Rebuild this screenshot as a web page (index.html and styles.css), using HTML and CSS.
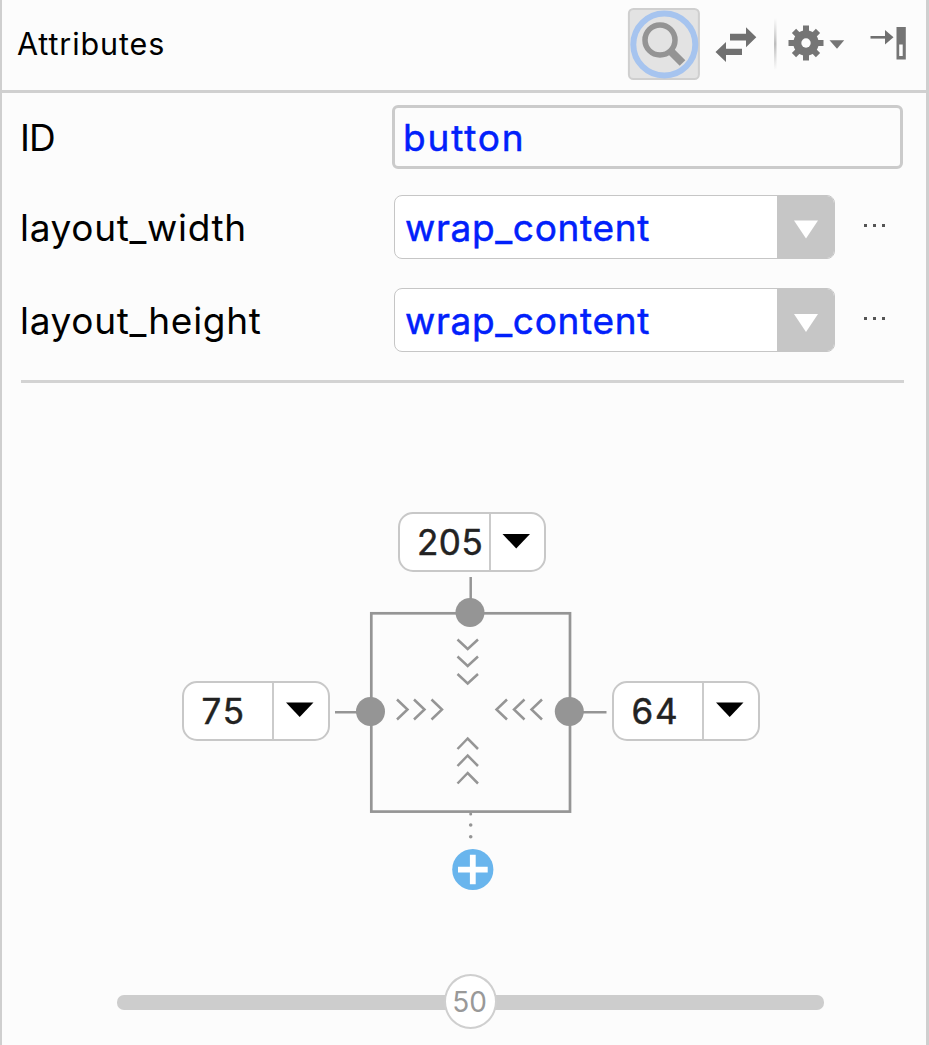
FILE: index.html
```html
<!DOCTYPE html>
<html lang="en">
<head>
<meta charset="utf-8">
<title>Attributes</title>
<link rel="stylesheet" href="styles.css">
</head>
<body>
<main class="panel">
  <header class="header">
    <h1 class="title">Attributes</h1>
    <svg class="toolbar" width="301" height="90" viewBox="625 0 301 90">
      <defs>
        <linearGradient id="fade" x1="0" y1="0" x2="0" y2="1">
          <stop offset="0" stop-color="#c4c4c4" stop-opacity="0"/>
          <stop offset=".5" stop-color="#bdbdbd"/>
          <stop offset="1" stop-color="#c4c4c4" stop-opacity="0"/>
        </linearGradient>
      </defs>
      <rect x="628.9" y="9" width="70" height="70" rx="4.500" fill="#e3e3e3" stroke="#cfcfcf" stroke-width="2"/>
      <circle cx="664.300" cy="44.500" r="31" fill="none" stroke="#a6c4ef" stroke-width="6"/>
      <circle cx="660" cy="40" r="15" fill="none" stroke="#949494" stroke-width="5.500"/>
      <path d="M671 51.500L682.500 63" stroke="#949494" stroke-width="8"/>
      <g fill="#707070">
        <path d="M730 33.800H746V27.300L756.300 37.300L746 47.300V40.500H730Z"/>
        <path d="M742 48.700H726V42L715.500 52L726 62V55H742Z"/>
      </g>
      <rect x="774" y="18" width="2.500" height="52" fill="url(#fade)"/>
      <g fill="#757575">
        <g transform="translate(806 43)">
          <circle r="12.700"/>
          <rect x="-3" y="-17.500" width="6" height="35"/>
          <rect x="-17.500" y="-3" width="35" height="6"/>
          <rect x="-3" y="-17" width="6" height="34" transform="rotate(45)"/>
          <rect x="-3" y="-17" width="6" height="34" transform="rotate(-45)"/>
          <circle r="4.700" fill="#fcfcfc"/>
        </g>
        <path d="M829.500 40.300H844.200L837 48.800Z"/>
      </g>
      <path d="M870.500 37.300H887" stroke="#707070" stroke-width="2.600"/>
      <path d="M885 30L893.500 37.300L885 44.600Z" fill="#707070"/>
      <rect x="896.500" y="27" width="9.300" height="32.500" fill="#757575"/>
      <rect x="899.200" y="44.500" width="3.500" height="11.500" fill="#fcfcfc"/>
    </svg>
  </header>

  <section class="form">
    <div class="row">
      <label class="label label-id">ID</label>
      <div class="input"><span class="value value-id">button</span></div>
    </div>
    <div class="row">
      <label class="label">layout_width</label>
      <div class="combo">
        <span class="value value-combo">wrap_content</span>
        <svg class="drop" width="57" height="64"><path d="M17 25.500H41L29 43.500Z" fill="#fff"/></svg>
      </div>
      <svg class="more" width="24" height="6"><path d="M1 1h3v3h-3zM10 1h3v3h-3zM19 1h3v3h-3z" fill="#555"/></svg>
    </div>
    <div class="row">
      <label class="label">layout_height</label>
      <div class="combo">
        <span class="value value-combo">wrap_content</span>
        <svg class="drop" width="57" height="64"><path d="M17 26H41L29 44Z" fill="#fff"/></svg>
      </div>
      <svg class="more" width="24" height="6"><path d="M1 1h3v3h-3zM10 1h3v3h-3zM19 1h3v3h-3z" fill="#555"/></svg>
    </div>
  </section>

  <section class="constraints">
    <svg class="wires" width="924" height="562" viewBox="2 383 924 562">
      <g fill="none" stroke="#959595">
        <rect x="371.300" y="613.300" width="198.700" height="198.300" stroke-width="2.700"/>
        <path d="M470.700 577V600M335 712.300H358M582 712.300H606.500" stroke-width="2.500"/>
        <path stroke-width="2.500" d="M457.500 639.500L467.700 649L478 639.500M457.500 656.500L467.700 666L478 656.500M457.500 674L467.700 683.500L478 674
          M457.500 749L467.700 738.500L478 749M457.500 766L467.700 755.500L478 766M457.500 783.500L467.700 773L478 783.500
          M397 699.500L407.500 709.500L397 719.500M414 699.500L424.500 709.500L414 719.500M431.500 699.500L442 709.500L431.500 719.500
          M507 699.500L496.500 709.500L507 719.500M524.500 699.500L514 709.500L524.500 719.500M542 699.500L531.500 709.500L542 719.500"/>
      </g>
      <g fill="#959595">
        <circle cx="470" cy="612.400" r="14.500"/>
        <circle cx="370.500" cy="711.500" r="14.500"/>
        <circle cx="569.300" cy="711.500" r="14.500"/>
        <circle cx="470.700" cy="814" r="1.500"/>
        <circle cx="470.700" cy="825" r="1.800"/>
        <circle cx="470.700" cy="836.700" r="1.800"/>
      </g>
      <circle cx="472.800" cy="869.500" r="20.600" fill="#69b5ed"/>
      <path d="M458 869.600H487.700M472.800 854.800V884.200" stroke="#fff" stroke-width="5.800"/>
    </svg>
    <div class="margin margin-top"><span class="num num-long">205</span><svg class="pick" width="55" height="58"><path d="M11.500 21H39L25.200 35.500Z"/></svg></div>
    <div class="margin margin-left"><span class="num num-short">75</span><svg class="pick" width="56" height="58"><path d="M12 20.500H39.500L25.700 35Z"/></svg></div>
    <div class="margin margin-right"><span class="num num-short">64</span><svg class="pick" width="56" height="58"><path d="M12 20.500H39.500L25.700 35Z"/></svg></div>
  </section>

  <div class="slider">
    <div class="track"></div>
    <div class="thumb">50</div>
  </div>
</main>
</body>
</html>
```

FILE: styles.css
```css
* { box-sizing: border-box; }
body {
  margin: 0;
  font-family: Inter, "Liberation Sans", sans-serif;
  background: #fcfcfc;
  color: #000;
}
.panel {
  width: 929px;
  height: 1045px;
  overflow: hidden;
  border-left: 2px solid #cfcfcf;
  border-right: 3px solid #cfcfcf;
}
.header {
  display: flex;
  align-items: center;
  justify-content: space-between;
  height: 93px;
  padding-left: 15px;
  border-bottom: 3px solid #d0d0d0;
}
.title {
  margin: 0 0 3px;
  font-size: 30.5px;
  font-weight: 400;
  line-height: 40px;
  letter-spacing: .9px;
}
.toolbar { flex: none; }
.form {
  display: flex;
  flex-direction: column;
  height: 290px;
  margin: 0 22px 0 19px;
  padding-top: 12px;
  border-bottom: 3px solid #d3d3d3;
}
.row {
  display: flex;
  align-items: center;
  height: 64px;
  margin-bottom: 26px;
}
.row + .row { margin-bottom: 29px; }
.label {
  width: 371px;
  padding-top: 2px;
  font-size: 37px;
  line-height: 50px;
  letter-spacing: .68px;
  text-indent: -1px;
}
.label-id { letter-spacing: -1px; }
.input {
  display: flex;
  align-items: center;
  width: 511px;
  height: 64px;
  padding-left: 8px;
  border: 3px solid #cbcbcb;
  border-radius: 6px;
}
.value {
  padding-top: 2px;
  color: #0120fb;
  font-size: 37px;
  line-height: 50px;
  -webkit-text-stroke: .5px #0120fb;
}
.value-id { letter-spacing: 1.8px; }
.value-combo { letter-spacing: .67px; }
.combo {
  display: flex;
  align-items: center;
  justify-content: space-between;
  width: 441px;
  height: 64px;
  margin-left: 2px;
  padding-left: 10px;
  border: 1.5px solid #c6c6c6;
  border-radius: 8px;
  background: #fff;
  overflow: hidden;
}
.drop { flex: none; background: #c6c6c6; }
.more { margin: 0 0 2px 28px; }
.constraints { position: relative; height: 562px; }
.wires { display: block; }
.margin {
  position: absolute;
  display: flex;
  align-items: center;
  justify-content: space-between;
  width: 148px;
  height: 60px;
  border: 2.5px solid #c8c8c8;
  border-radius: 15px;
  background: #fff;
  overflow: hidden;
}
.margin-top { left: 396px; top: 129px; }
.margin-left { left: 179.5px; top: 298px; }
.margin-right { left: 609.5px; top: 298px; }
.num {
  padding-left: 18px;
  color: #222;
  font-size: 35px;
  line-height: 48px;
  -webkit-text-stroke: .5px #222;
}
.num-long { padding-left: 17px; margin-right: -4px; letter-spacing: .5px; }
.num-short { letter-spacing: 1.8px; }
.pick { flex: none; border-left: 2px solid #cbcbcb; }
.slider {
  display: grid;
  align-items: center;
  justify-items: center;
  width: 707px;
  height: 56px;
  margin: 29px 0 0 115px;
}
.slider > * { grid-area: 1 / 1; }
.track {
  width: 707px;
  height: 15px;
  border-radius: 7px;
  background: #cdcdcd;
}
.thumb {
  width: 53px;
  height: 55px;
  margin-bottom: 1px;
  padding-right: 2px;
  border: 2.5px solid #cfcfcf;
  border-radius: 50%;
  background: #fff;
  color: #999;
  font-size: 28px;
  line-height: 53px;
  text-align: center;
}
```
